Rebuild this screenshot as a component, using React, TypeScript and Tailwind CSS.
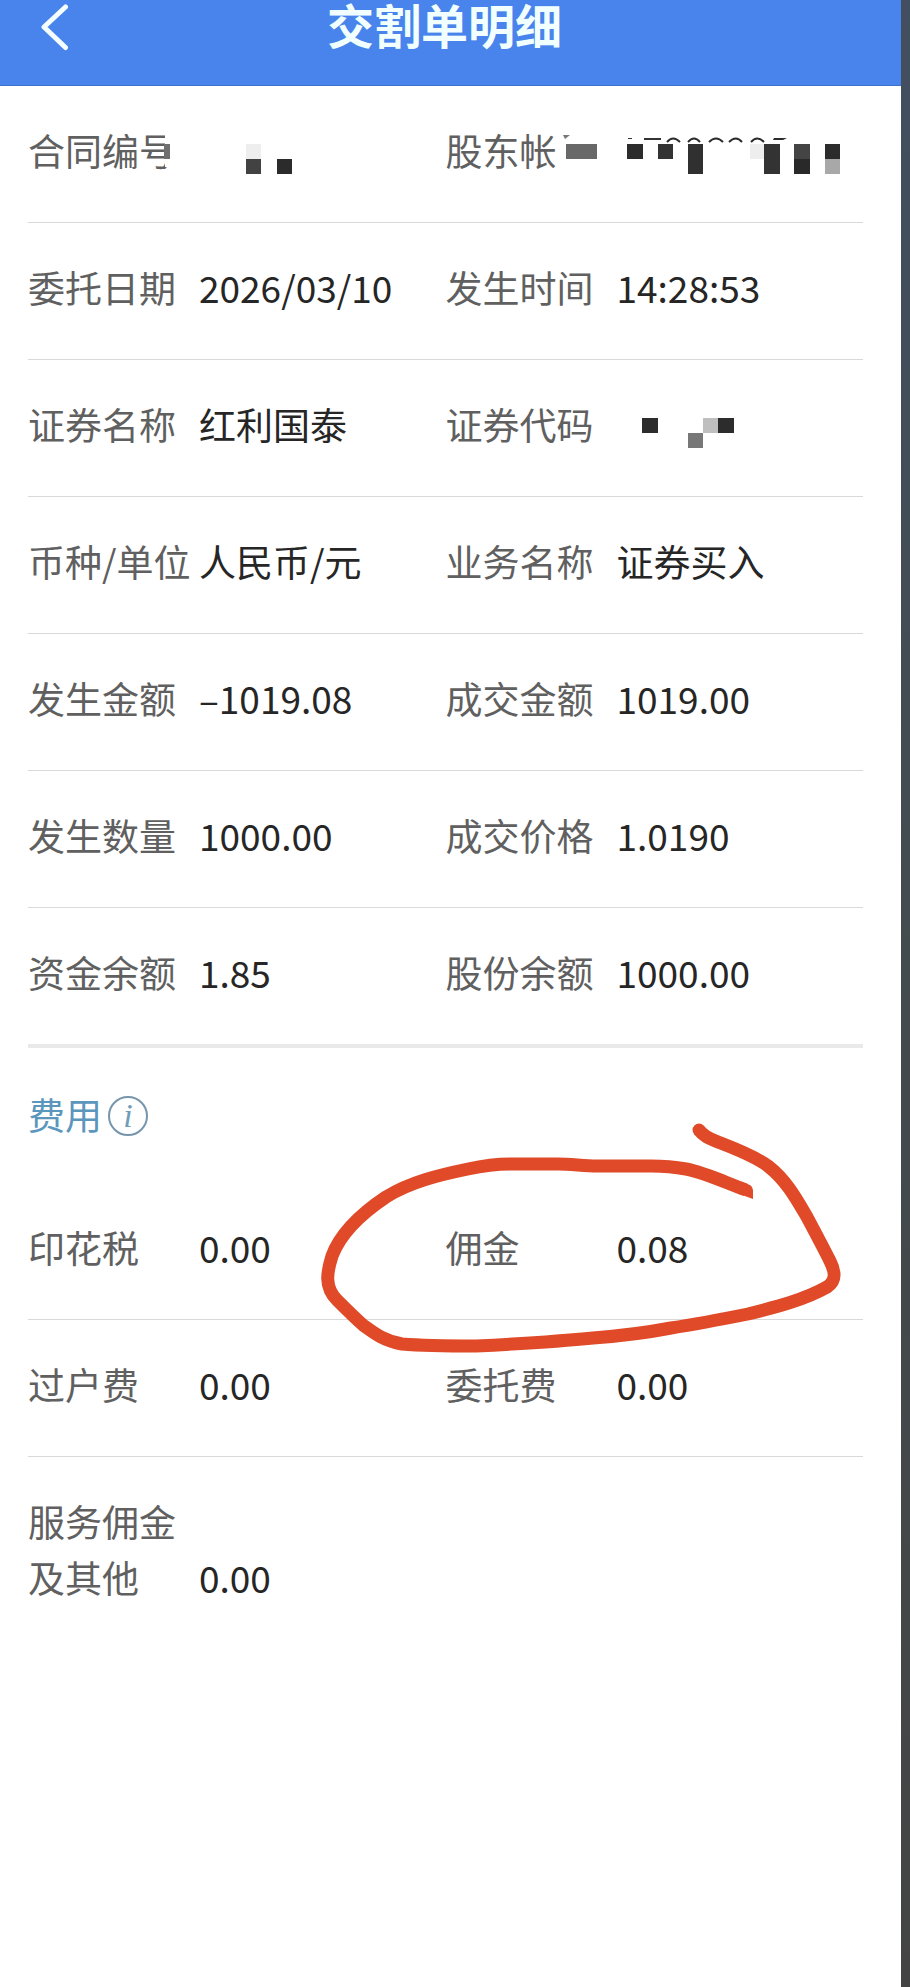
import type { ReactNode } from "react";

type Block = { x: number; y: number; w: number; h: number; fill: string };

/* Pixelated blocks laid over private account data. */
function Mosaic({ blocks, children }: { blocks: Block[]; children?: ReactNode }) {
  return (
    <svg
      className="pointer-events-none absolute left-0 top-0 overflow-visible"
      width="417"
      height="136"
      viewBox="0 0 417 136"
      aria-hidden="true"
      shapeRendering="crispEdges"
    >
      {blocks.map((b, i) => (
        <rect key={i} x={b.x} y={b.y} width={b.w} height={b.h} fill={b.fill} />
      ))}
      {children}
    </svg>
  );
}

function Field({ label, value, children }: { label: ReactNode; value?: string; children?: ReactNode }) {
  return (
    <div className="relative flex items-end pt-9 pb-11 whitespace-nowrap">
      <dt className="w-[171px] shrink-0 text-[#606060]">{label}</dt>
      <dd className="min-h-[56px] text-[#262626]">{value}</dd>
      {children}
    </div>
  );
}

function Row({ children, last = "thin" }: { children: ReactNode; last?: "thin" | "thick" | "none" }) {
  const border =
    last === "thin"
      ? "border-b border-[#d9d9d9]"
      : last === "thick"
        ? "border-b-4 border-[#e9e9e9]"
        : "";
  return <dl className={`grid grid-cols-2 ${border}`}>{children}</dl>;
}

function RedCircle() {
  return (
    <svg
      className="pointer-events-none absolute left-[-125px] top-[-63px] z-10"
      width="526"
      height="240"
      viewBox="320 1120 526 240"
      fill="none"
      aria-hidden="true"
    >
      <path
        d="M698 1130C703 1137 710 1139 717 1142C732 1148 752 1155 767 1166C785 1180 795 1198 806 1217C814 1232 822 1247 829 1261C835 1273 835 1281 826 1287C803 1300 775 1307 747 1314C722 1319 696 1324 670 1328C644 1333 618 1336 592 1338C553 1342 514 1344 475 1346C450 1346 425 1346 401 1344C383 1341 373 1333 362 1325C353 1317 344 1308 336 1300C323 1287 326 1272 331 1256C340 1232 361 1213 385 1197C409 1182 438 1175 467 1169C481 1166 495 1164 510 1164C529 1164 543 1164 557 1164C570 1164 583 1166 596 1166L650 1166C662 1166 674 1167 685 1169C705 1173 723 1182 745 1190"
        stroke="#e04a28"
        strokeWidth="13"
        strokeLinejoin="round"
      />
      <circle cx="698" cy="1130" r="6.5" fill="#e04a28" />
      <path d="M743 1183L749 1185Q752 1187 752 1190L752 1199L741 1195Z" fill="#e04a28" />
    </svg>
  );
}

export default function App() {
  return (
    <div className="flex min-h-screen bg-white font-['Noto_Sans_CJK_SC',sans-serif]">
      <div className="min-w-0 flex-1">
        <header className="grid h-[86px] grid-cols-[1fr_auto_1fr] items-start border-b border-[#3f70cc] bg-[#4884eb] pr-10 pl-7">
          <button type="button" aria-label="返回" className="flex h-[54px] w-12 items-center pl-3">
            <svg width="30" height="48" viewBox="0 0 30 48" fill="none" aria-hidden="true">
              <path d="M25.500 4L4 24L25.500 44.500" stroke="#f4fdff" strokeWidth="5" strokeLinecap="round" strokeLinejoin="round" />
            </svg>
          </button>
          <h1 className="text-[47px] leading-[47px] font-bold text-[#f2ffff]">交割单明细</h1>
        </header>

        <main className="pr-[38px] pl-7 text-[37px] leading-[56px]">
          <Row>
            <Field label="合同编号">
              <Mosaic
                blocks={[
                  { x: 137, y: 45, w: 14, h: 36, fill: "#fff" },
                  { x: 109, y: 73, w: 34, h: 4, fill: "#fff" },
                  { x: 136, y: 58, w: 6, h: 15, fill: "#707070" },
                  { x: 218, y: 58, w: 15, h: 15, fill: "#eeeeee" },
                  { x: 218, y: 73, w: 15, h: 15, fill: "#424242" },
                  { x: 249, y: 73, w: 15, h: 15, fill: "#2b2b2b" },
                ]}
              />
            </Field>
            <Field label="股东帐">
              <Mosaic
                blocks={[
                  { x: 120, y: 58, w: 31, h: 15, fill: "#686868" },
                  { x: 181, y: 58, w: 16, h: 15, fill: "#2c2c2c" },
                  { x: 212, y: 58, w: 15, h: 15, fill: "#333333" },
                  { x: 242, y: 58, w: 15, h: 30, fill: "#303030" },
                  { x: 304, y: 58, w: 14, h: 15, fill: "#eeeeee" },
                  { x: 318, y: 58, w: 16, h: 30, fill: "#333333" },
                  { x: 348, y: 58, w: 16, h: 15, fill: "#444444" },
                  { x: 348, y: 73, w: 16, h: 15, fill: "#292929" },
                  { x: 379, y: 58, w: 15, h: 15, fill: "#2c2c2c" },
                  { x: 379, y: 73, w: 15, h: 15, fill: "#a8a8a8" },
                  { x: 182, y: 52, w: 4, h: 1, fill: "#333333" },
                  { x: 198, y: 52, w: 17, h: 2, fill: "#333333" },
                ]}
              >
                <g shapeRendering="auto">
                  <path d="M117 49L124 49L119 53Z" fill="#777" />
                  <path
                    d="M221 56Q227 49 234 56M242 56Q248 49 254 56M263 56Q270 49 277 56M283 56Q290 49 296 56M305 56Q311 49 318 56"
                    fill="none"
                    stroke="#2c2c2c"
                    strokeWidth="2"
                  />
                  <path d="M328 52H341L337 54H327Z" fill="#2c2c2c" />
                </g>
              </Mosaic>
            </Field>
          </Row>
          <Row>
            <Field label="委托日期" value="2026/03/10" />
            <Field label="发生时间" value="14:28:53" />
          </Row>
          <Row>
            <Field label="证券名称" value="红利国泰" />
            <Field label="证券代码">
              <Mosaic
                blocks={[
                  { x: 196, y: 58, w: 16, h: 15, fill: "#2c2c2c" },
                  { x: 257, y: 58, w: 15, h: 15, fill: "#bfbfbf" },
                  { x: 272, y: 58, w: 16, h: 15, fill: "#2c2c2c" },
                  { x: 242, y: 73, w: 15, h: 15, fill: "#777777" },
                ]}
              />
            </Field>
          </Row>
          <Row>
            <Field label="币种/单位" value="人民币/元" />
            <Field label="业务名称" value="证券买入" />
          </Row>
          <Row>
            <Field label="发生金额" value="–1019.08" />
            <Field label="成交金额" value="1019.00" />
          </Row>
          <Row>
            <Field label="发生数量" value="1000.00" />
            <Field label="成交价格" value="1.0190" />
          </Row>
          <Row last="thick">
            <Field label="资金余额" value="1.85" />
            <Field label="股份余额" value="1000.00" />
          </Row>

          <div className="flex h-[135px] items-center gap-1.5 text-[#5b96bd]">
            <h2 className="pb-1">费用</h2>
            <button
              type="button"
              aria-label="费用说明"
              className="flex size-10 items-center justify-center rounded-full border-2 border-[#7595ad] font-['Liberation_Serif',serif] text-[34px] leading-[34px] text-[#6f9db8] italic"
            >
              i
            </button>
          </div>

          <Row>
            <Field label="印花税" value="0.00" />
            <Field label="佣金" value="0.08">
              <RedCircle />
            </Field>
          </Row>
          <Row>
            <Field label="过户费" value="0.00" />
            <Field label="委托费" value="0.00" />
          </Row>
          <Row last="none">
            <Field
              label={
                <>
                  服务佣金
                  <br />
                  及其他
                </>
              }
              value="0.00"
            />
          </Row>
        </main>
      </div>
      <div className="w-[9px] shrink-0 bg-linear-to-b from-[#434f60] via-[#434b4e] to-[#444444]" />
    </div>
  );
}
